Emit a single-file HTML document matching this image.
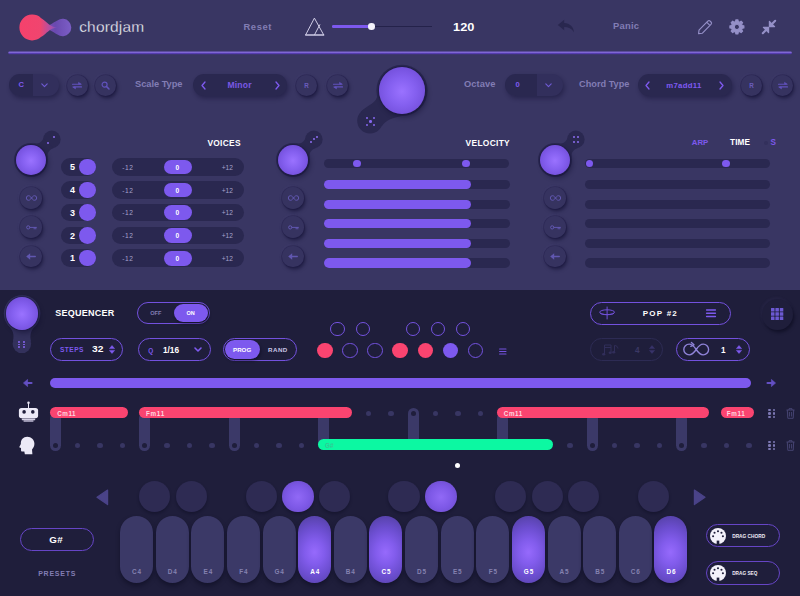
<!DOCTYPE html><html><head><meta charset='utf-8'><title>chordjam</title><style>
*{box-sizing:border-box;margin:0;padding:0}
html,body{width:800px;height:596px;overflow:hidden;background:#1f1e3b;}
body{font-family:"Liberation Sans",sans-serif;position:relative;color:#fff}
#top{position:absolute;left:0;top:0;width:800px;height:290px;background:#393663}
.a{position:absolute}
.x{position:absolute;white-space:nowrap;line-height:1}
.rb{position:absolute;border-radius:50%;background:#363360;box-shadow:0 0 0 .8px rgba(28,25,66,.45),1.5px 2.5px 3.5px rgba(15,13,45,.55),-1px -1px 2px rgba(120,115,180,.12);}
.knob{position:absolute;border-radius:50%;background:radial-gradient(circle at 50% 52%,#9a72ff 0%,#8560f0 40%,#7450dc 75%,#6848c8 100%);box-shadow:0 0 0 1px rgba(30,25,70,.55),2px 3px 5px rgba(10,8,40,.45)}
svg{position:absolute;overflow:visible}
</style></head><body>
<div id='top'></div>
<svg style='left:0px;top:0px' width='800' height='60' viewBox='0 0 800 60'><defs><linearGradient id="lg1" gradientUnits="userSpaceOnUse" x1="19" x2="58" y1="0" y2="0"><stop offset="0" stop-color="#f6416c"/><stop offset="0.55" stop-color="#f0456f"/><stop offset="0.8" stop-color="#b04fa6"/><stop offset="1" stop-color="#7a52c0"/></linearGradient>
<linearGradient id="lg2" gradientUnits="userSpaceOnUse" x1="42" x2="72" y1="0" y2="0"><stop offset="0" stop-color="#8a50b8" stop-opacity=".9"/><stop offset="0.45" stop-color="#6c4bb4" stop-opacity=".95"/><stop offset="1" stop-color="#8463d2" stop-opacity=".9"/></linearGradient><linearGradient id="lg3" x1="0" x2="0" y1="0" y2="1"><stop offset="0" stop-color="#7c62d4"/><stop offset=".45" stop-color="#8068d4"/><stop offset=".6" stop-color="#5a40b6"/><stop offset="1" stop-color="#4c36a0"/></linearGradient></defs>
<path d="M57.40 20.52 C52.30 23.17 48.18 26.90 42.00 27.50 C48.18 28.10 52.30 31.83 57.40 34.48 A8.7 8.7 0 1 0 57.40 20.52Z" fill="url(#lg2)"/>
<path d="M40.93 17.92 C47.05 21.56 49.59 26.90 57.00 27.50 C49.59 28.10 47.05 33.44 40.93 37.08 A12.9 12.9 0 1 1 40.93 17.92Z" fill="url(#lg1)"/>
<rect x="8.3" y="51.6" width="783.5" height="2.7" rx="1.2" fill="url(#lg3)"/></svg>
<div class='x' style='left:79.2px;top:19.36px;font-size:15.5px;color:#f6f5fc;letter-spacing:0.18px;-webkit-text-stroke:0.3px #393663'>chordjam</div>
<div class='x' style='left:243.50px;top:21.73px;font-size:9.4px;letter-spacing:0.60px;color:#827db4;font-weight:bold;'>Reset</div>
<div class='x' style='left:613.00px;top:21.31px;font-size:9.4px;letter-spacing:0.23px;color:#827db4;font-weight:bold;'>Panic</div>
<svg style='left:304px;top:16px' width='22' height='21' viewBox='0 0 22 21'><path d='M1.6 19 L10.4 2.1 L19.75 19' fill='none' stroke='#cfcce6' stroke-width='1' stroke-linejoin='round'/><path d='M1.2 19 H20.2' stroke='#cfcce6' stroke-width='1.5'/><path d='M10.4 19 L16 8.4' stroke='#cfcce6' stroke-width='1'/></svg>
<div class='a' style='left:372.00px;top:25.90px;width:59.50px;height:1.50px;border-radius:0;background:#24224a;'></div>
<div class='a' style='left:332.00px;top:25.30px;width:40.00px;height:2.70px;border-radius:1.3px;background:#7d59ee;'></div>
<div class='a' style='left:368.20px;top:23.30px;width:6.60px;height:6.60px;border-radius:50%;background:#f4f3fb'></div>
<div class='x' style='left:453.20px;top:22.59px;font-size:10.2px;letter-spacing:0.04px;color:#fff;font-weight:bold;transform:scaleX(1.25);transform-origin:0 0;'>120</div>
<svg style='left:557px;top:19px' width='18' height='14' viewBox='0 0 18 14'><path d='M7.2 0.8 L0.8 6 L7.2 11.2 L7.2 8 C11.5 8 14.5 9.5 17 13.2 C16.5 8 13 4.2 7.2 4 Z' fill='#29274f'/></svg>
<svg style='left:697px;top:19px' width='16' height='16' viewBox='0 0 16 16'><path d='M1.6 14.6 L2 11.2 L10.8 2.2 a1.7 1.7 0 0 1 2.4 0 l0.8 0.8 a1.7 1.7 0 0 1 0 2.4 L5.2 14.3 Z M9.9 3.3 L12.9 6.3' fill='none' stroke='#9590c8' stroke-width='1.15' stroke-linejoin='round'/></svg>
<svg style='left:728px;top:18px' width='18' height='18' viewBox='0 0 18 18'><path d='M15.91 7.79 L15.91 10.01 L14.25 10.18 L13.59 11.77 L14.64 13.07 L13.07 14.64 L11.77 13.59 L10.18 14.25 L10.01 15.91 L7.79 15.91 L7.62 14.25 L6.03 13.59 L4.73 14.64 L3.16 13.07 L4.21 11.77 L3.55 10.18 L1.89 10.01 L1.89 7.79 L3.55 7.62 L4.21 6.03 L3.16 4.73 L4.73 3.16 L6.03 4.21 L7.62 3.55 L7.79 1.89 L10.01 1.89 L10.18 3.55 L11.77 4.21 L13.07 3.16 L14.64 4.73 L13.59 6.03 L14.25 7.62Z M8.9 6.3 a2.6 2.6 0 1 0 0.01 0Z' fill='#9590c8' fill-rule='evenodd' stroke='#9590c8' stroke-width='1.1' stroke-linejoin='round'/></svg>
<svg style='left:761px;top:19px' width='16' height='16' viewBox='0 0 16 16'><g stroke='#9590c8' stroke-width='2.1' stroke-linecap='round'><path d='M14.2 1.8 L11 5'/><path d='M1.8 14.2 L5 11'/></g><path d='M8.4 2.4 L8.4 7.6 L13.6 7.6 Z M7.6 13.6 L7.6 8.4 L2.4 8.4 Z' fill='#9590c8' stroke='#9590c8' stroke-width='1.2' stroke-linejoin='round'/></svg>
<div class='a' style='left:9.00px;top:73.60px;width:49.50px;height:22.80px;border-radius:999px;background:#322f5c;box-shadow:1.5px 2.5px 4px rgba(15,13,45,.4)'></div>
<div class='a' style='left:9.00px;top:73.60px;width:24.00px;height:22.80px;border-radius:11.4px 0 0 11.4px;background:#2a2850;'></div>
<div class='x' style='left:18.51px;top:81.48px;font-size:7.6px;letter-spacing:0.00px;color:#7f5af0;font-weight:bold;'>C</div>
<svg style='left:40.8px;top:83.1px' width='7' height='4.4' viewBox='0 0 7 4.4'><path d='M0.8 0.8 L3.5 3.6 L6.2 0.8' fill='none' stroke='#6e5ad2' stroke-width='1.15' stroke-linecap='round' stroke-linejoin='round'/></svg>
<div class='rb' style='left:66.5px;top:74.5px;width:21.6px;height:21.6px'></div>
<svg style='left:72.3px;top:81.7px' width='10' height='7.2' viewBox='0 0 10 7.2'><path d='M0.5 2.3 H8.3 M9.5 4.9 H1.7' fill='none' stroke='#6152bc' stroke-width='1.1' stroke-linecap='round'/><path d='M6.5 0.3 L9.5 2.3 L6.5 2.3Z M3.5 6.9 L0.5 4.9 L3.5 4.9Z' fill='#6152bc' stroke='#6152bc' stroke-width='.5' stroke-linejoin='round'/></svg>
<div class='rb' style='left:94.5px;top:74.5px;width:21.6px;height:21.6px'></div>
<svg style='left:100.8px;top:80.8px' width='9' height='9' viewBox='0 0 9 9'><circle cx='3.6' cy='3.6' r='2.5' fill='none' stroke='#6152bc' stroke-width='1.2'/><path d='M5.6 5.6 L8 8' stroke='#6152bc' stroke-width='1.5' stroke-linecap='round'/></svg>
<div class='x' style='left:135.00px;top:80.21px;font-size:9.3px;letter-spacing:-0.04px;color:#827db4;font-weight:bold;'>Scale Type</div>
<div class='a' style='left:193.00px;top:73.60px;width:94.00px;height:22.80px;border-radius:999px;background:#2a2850;box-shadow:1.5px 2.5px 4px rgba(15,13,45,.4)'></div>
<svg style='left:200.5px;top:80.7px' width='5' height='9' viewBox='0 0 5 9'><path d='M4 1 L1 4.5 L4 8' fill='none' stroke='#7f5af0' stroke-width='1.3' stroke-linecap='round' stroke-linejoin='round'/></svg>
<svg style='left:274.5px;top:80.7px' width='5' height='9' viewBox='0 0 5 9'><path d='M1 1 L4 4.5 L1 8' fill='none' stroke='#7f5af0' stroke-width='1.3' stroke-linecap='round' stroke-linejoin='round'/></svg>
<div class='x' style='left:227.50px;top:80.58px;font-size:8.6px;letter-spacing:0.15px;color:#7a59e6;font-weight:bold;'>Minor</div>
<div class='rb' style='left:295.5px;top:74.5px;width:21.6px;height:21.6px'></div>
<div class='x' style='left:304.33px;top:83.03px;font-size:6.3px;letter-spacing:0.00px;color:#6a5cbc;font-weight:bold;'>R</div>
<div class='rb' style='left:326.5px;top:74.5px;width:21.6px;height:21.6px'></div>
<svg style='left:332.5px;top:81.7px' width='10' height='7.2' viewBox='0 0 10 7.2'><path d='M0.5 2.3 H8.3 M9.5 4.9 H1.7' fill='none' stroke='#6152bc' stroke-width='1.1' stroke-linecap='round'/><path d='M6.5 0.3 L9.5 2.3 L6.5 2.3Z M3.5 6.9 L0.5 4.9 L3.5 4.9Z' fill='#6152bc' stroke='#6152bc' stroke-width='.5' stroke-linejoin='round'/></svg>
<svg style='left:340px;top:55px' width='100' height='90' viewBox='340 55 100 90'><g fill="#2a2850"><circle cx="402" cy="90.4" r="25.6"/><circle cx="370" cy="120.8" r="12.8"/>
<path d="M361 111.5 C369 104 376 104 378 94 L402 116 C392 118 386 120 382 126 Z"/></g></svg>
<div class='knob' style='left:378.7px;top:67.10000000000001px;width:46.6px;height:46.6px'></div>
<div class='a' style='left:366.00px;top:116.80px;width:2.40px;height:2.40px;border-radius:50%;background:#8666ee'></div>
<div class='a' style='left:372.80px;top:116.80px;width:2.40px;height:2.40px;border-radius:50%;background:#8666ee'></div>
<div class='a' style='left:369.40px;top:120.20px;width:2.40px;height:2.40px;border-radius:50%;background:#8666ee'></div>
<div class='a' style='left:366.00px;top:123.60px;width:2.40px;height:2.40px;border-radius:50%;background:#8666ee'></div>
<div class='a' style='left:372.80px;top:123.60px;width:2.40px;height:2.40px;border-radius:50%;background:#8666ee'></div>
<div class='x' style='left:464.00px;top:79.66px;font-size:9.3px;letter-spacing:0.06px;color:#827db4;font-weight:bold;'>Octave</div>
<div class='a' style='left:505.00px;top:73.60px;width:57.50px;height:22.80px;border-radius:999px;background:#322f5c;box-shadow:1.5px 2.5px 4px rgba(15,13,45,.4)'></div>
<div class='a' style='left:505.00px;top:73.60px;width:32.00px;height:22.80px;border-radius:11.4px 0 0 11.4px;background:#2a2850;'></div>
<div class='x' style='left:515.39px;top:81.40px;font-size:7.6px;letter-spacing:0.00px;color:#7f5af0;font-weight:bold;'>0</div>
<svg style='left:544.8px;top:83.1px' width='7' height='4.4' viewBox='0 0 7 4.4'><path d='M0.8 0.8 L3.5 3.6 L6.2 0.8' fill='none' stroke='#6e5ad2' stroke-width='1.15' stroke-linecap='round' stroke-linejoin='round'/></svg>
<div class='x' style='left:579.00px;top:80.34px;font-size:9.2px;letter-spacing:0.01px;color:#827db4;font-weight:bold;'>Chord Type</div>
<div class='a' style='left:638.00px;top:73.60px;width:93.50px;height:22.80px;border-radius:999px;background:#2a2850;box-shadow:1.5px 2.5px 4px rgba(15,13,45,.4)'></div>
<svg style='left:644.5px;top:80.7px' width='5' height='9' viewBox='0 0 5 9'><path d='M4 1 L1 4.5 L4 8' fill='none' stroke='#7f5af0' stroke-width='1.3' stroke-linecap='round' stroke-linejoin='round'/></svg>
<svg style='left:719.0px;top:80.7px' width='5' height='9' viewBox='0 0 5 9'><path d='M1 1 L4 4.5 L1 8' fill='none' stroke='#7f5af0' stroke-width='1.3' stroke-linecap='round' stroke-linejoin='round'/></svg>
<div class='x' style='left:666.20px;top:82.05px;font-size:7.8px;letter-spacing:0.29px;color:#7f5af0;font-weight:bold;'>m7add11</div>
<div class='rb' style='left:740.5px;top:74.5px;width:21.6px;height:21.6px'></div>
<div class='x' style='left:749.33px;top:83.03px;font-size:6.3px;letter-spacing:0.00px;color:#6a5cbc;font-weight:bold;'>R</div>
<div class='rb' style='left:771.5px;top:74.5px;width:21.6px;height:21.6px'></div>
<svg style='left:777.5px;top:81.7px' width='10' height='7.2' viewBox='0 0 10 7.2'><path d='M0.5 2.3 H8.3 M9.5 4.9 H1.7' fill='none' stroke='#6152bc' stroke-width='1.1' stroke-linecap='round'/><path d='M6.5 0.3 L9.5 2.3 L6.5 2.3Z M3.5 6.9 L0.5 4.9 L3.5 4.9Z' fill='#6152bc' stroke='#6152bc' stroke-width='.5' stroke-linejoin='round'/></svg>
<svg style='left:6.199999999999999px;top:125px' width='60' height='60' viewBox='6.199999999999999 125 60 60'><g fill="#2a2850"><circle cx="31.2" cy="160" r="17"/><circle cx="52.0" cy="139.4" r="8.8"/>
<path d="M34.2 143.5 C40.2 144 42.2 141 43.5 138.4 L54.0 147.9 C51.2 149 47.2 151 47.7 157Z"/></g></svg>
<div class='knob' style='left:16.1px;top:144.9px;width:30.2px;height:30.2px'></div>
<div class='a' style='left:52.60px;top:136.20px;width:2.00px;height:2.00px;border-radius:50%;background:#8c6cf0'></div>
<div class='a' style='left:47.20px;top:141.80px;width:2.00px;height:2.00px;border-radius:50%;background:#8c6cf0'></div>
<svg style='left:268.2px;top:125px' width='60' height='60' viewBox='268.2 125 60 60'><g fill="#2a2850"><circle cx="293.2" cy="160" r="17"/><circle cx="314.0" cy="139.4" r="8.8"/>
<path d="M296.2 143.5 C302.2 144 304.2 141 305.5 138.4 L316.0 147.9 C313.2 149 309.2 151 309.7 157Z"/></g></svg>
<div class='knob' style='left:278.09999999999997px;top:144.9px;width:30.2px;height:30.2px'></div>
<div class='a' style='left:315.70px;top:135.70px;width:2.00px;height:2.00px;border-radius:50%;background:#8c6cf0'></div>
<div class='a' style='left:313.00px;top:138.40px;width:2.00px;height:2.00px;border-radius:50%;background:#8c6cf0'></div>
<div class='a' style='left:310.30px;top:141.10px;width:2.00px;height:2.00px;border-radius:50%;background:#8c6cf0'></div>
<svg style='left:530.2px;top:125px' width='60' height='60' viewBox='530.2 125 60 60'><g fill="#2a2850"><circle cx="555.2" cy="160" r="17"/><circle cx="576.0" cy="139.4" r="8.8"/>
<path d="M558.2 143.5 C564.2 144 566.2 141 567.5 138.4 L578.0 147.9 C575.2 149 571.2 151 571.7 157Z"/></g></svg>
<div class='knob' style='left:540.1px;top:144.9px;width:30.2px;height:30.2px'></div>
<div class='a' style='left:572.60px;top:136.00px;width:2.00px;height:2.00px;border-radius:50%;background:#8c6cf0'></div>
<div class='a' style='left:577.40px;top:136.00px;width:2.00px;height:2.00px;border-radius:50%;background:#8c6cf0'></div>
<div class='a' style='left:572.60px;top:140.80px;width:2.00px;height:2.00px;border-radius:50%;background:#8c6cf0'></div>
<div class='a' style='left:577.40px;top:140.80px;width:2.00px;height:2.00px;border-radius:50%;background:#8c6cf0'></div>
<div class='rb' style='left:20.4px;top:187.2px;width:21.6px;height:21.6px'></div>
<svg style='left:25.7px;top:195px' width='11' height='6' viewBox='0 0 11 6'><path d='M5.5 3 C4.3 1.2 3.3 0.7 2.6 0.7 A2.3 2.3 0 0 0 2.6 5.3 C3.3 5.3 4.3 4.8 5.5 3 C6.7 1.2 7.7 0.7 8.4 0.7 A2.3 2.3 0 0 1 8.4 5.3 C7.7 5.3 6.7 4.8 5.5 3Z' fill='none' stroke='#6157b0' stroke-width='1'/></svg>
<div class='rb' style='left:20.4px;top:216.39999999999998px;width:21.6px;height:21.6px'></div>
<svg style='left:25.7px;top:224.7px' width='11' height='5' viewBox='0 0 11 5'><circle cx='2.2' cy='2.4' r='1.6' fill='none' stroke='#6157b0' stroke-width='1'/><path d='M3.9 2.4 H10.3 M8.2 2.4 V3.9 M9.8 2.4 V3.9' fill='none' stroke='#6157b0' stroke-width='1' stroke-linecap='round'/></svg>
<div class='rb' style='left:20.4px;top:245.8px;width:21.6px;height:21.6px'></div>
<svg style='left:25.7px;top:253.10000000000002px' width='10' height='7' viewBox='0 0 10 7'><path d='M4.2 0.2 L0.2 3.5 L4.2 6.8 Z' fill='#6157b0'/><path d='M3 3.5 H9.3' stroke='#6157b0' stroke-width='1.3' stroke-linecap='round'/></svg>
<div class='rb' style='left:282.4px;top:187.2px;width:21.6px;height:21.6px'></div>
<svg style='left:287.7px;top:195px' width='11' height='6' viewBox='0 0 11 6'><path d='M5.5 3 C4.3 1.2 3.3 0.7 2.6 0.7 A2.3 2.3 0 0 0 2.6 5.3 C3.3 5.3 4.3 4.8 5.5 3 C6.7 1.2 7.7 0.7 8.4 0.7 A2.3 2.3 0 0 1 8.4 5.3 C7.7 5.3 6.7 4.8 5.5 3Z' fill='none' stroke='#6157b0' stroke-width='1'/></svg>
<div class='rb' style='left:282.4px;top:216.39999999999998px;width:21.6px;height:21.6px'></div>
<svg style='left:287.7px;top:224.7px' width='11' height='5' viewBox='0 0 11 5'><circle cx='2.2' cy='2.4' r='1.6' fill='none' stroke='#6157b0' stroke-width='1'/><path d='M3.9 2.4 H10.3 M8.2 2.4 V3.9 M9.8 2.4 V3.9' fill='none' stroke='#6157b0' stroke-width='1' stroke-linecap='round'/></svg>
<div class='rb' style='left:282.4px;top:245.8px;width:21.6px;height:21.6px'></div>
<svg style='left:287.7px;top:253.10000000000002px' width='10' height='7' viewBox='0 0 10 7'><path d='M4.2 0.2 L0.2 3.5 L4.2 6.8 Z' fill='#6157b0'/><path d='M3 3.5 H9.3' stroke='#6157b0' stroke-width='1.3' stroke-linecap='round'/></svg>
<div class='rb' style='left:544.4000000000001px;top:187.2px;width:21.6px;height:21.6px'></div>
<svg style='left:549.7px;top:195px' width='11' height='6' viewBox='0 0 11 6'><path d='M5.5 3 C4.3 1.2 3.3 0.7 2.6 0.7 A2.3 2.3 0 0 0 2.6 5.3 C3.3 5.3 4.3 4.8 5.5 3 C6.7 1.2 7.7 0.7 8.4 0.7 A2.3 2.3 0 0 1 8.4 5.3 C7.7 5.3 6.7 4.8 5.5 3Z' fill='none' stroke='#6157b0' stroke-width='1'/></svg>
<div class='rb' style='left:544.4000000000001px;top:216.39999999999998px;width:21.6px;height:21.6px'></div>
<svg style='left:549.7px;top:224.7px' width='11' height='5' viewBox='0 0 11 5'><circle cx='2.2' cy='2.4' r='1.6' fill='none' stroke='#6157b0' stroke-width='1'/><path d='M3.9 2.4 H10.3 M8.2 2.4 V3.9 M9.8 2.4 V3.9' fill='none' stroke='#6157b0' stroke-width='1' stroke-linecap='round'/></svg>
<div class='rb' style='left:544.4000000000001px;top:245.8px;width:21.6px;height:21.6px'></div>
<svg style='left:549.7px;top:253.10000000000002px' width='10' height='7' viewBox='0 0 10 7'><path d='M4.2 0.2 L0.2 3.5 L4.2 6.8 Z' fill='#6157b0'/><path d='M3 3.5 H9.3' stroke='#6157b0' stroke-width='1.3' stroke-linecap='round'/></svg>
<div class='x' style='left:207.40px;top:138.76px;font-size:8.4px;letter-spacing:0.29px;color:#fff;font-weight:bold;'>VOICES</div>
<div class='a' style='left:61.30px;top:158.30px;width:34.60px;height:17.60px;border-radius:999px;background:#2a2850;'></div>
<div class='x' style='left:70.00px;top:162.94px;font-size:9px;letter-spacing:0.00px;color:#fff;font-weight:bold;'>5</div>
<div class='a' style='left:79.10px;top:158.80px;width:16.60px;height:16.60px;border-radius:50%;background:#7d59ee'></div>
<div class='a' style='left:112.00px;top:158.30px;width:132.00px;height:17.60px;border-radius:999px;background:#2a2850;'></div>
<div class='x' style='left:122.30px;top:164.88px;font-size:6.6px;letter-spacing:0.58px;color:#a6a2cc;font-weight:normal;'>-12</div>
<div class='a' style='left:164.00px;top:159.70px;width:27.60px;height:14.80px;border-radius:999px;background:#7d59ee;'></div>
<div class='x' style='left:175.42px;top:164.88px;font-size:6.6px;letter-spacing:0.00px;color:#fff;font-weight:bold;'>0</div>
<div class='x' style='left:221.80px;top:164.88px;font-size:6.6px;letter-spacing:-0.04px;color:#a6a2cc;font-weight:normal;'>+12</div>
<div class='a' style='left:61.30px;top:181.10px;width:34.60px;height:17.60px;border-radius:999px;background:#2a2850;'></div>
<div class='x' style='left:70.00px;top:185.58px;font-size:9px;letter-spacing:0.00px;color:#fff;font-weight:bold;'>4</div>
<div class='a' style='left:79.10px;top:181.60px;width:16.60px;height:16.60px;border-radius:50%;background:#7d59ee'></div>
<div class='a' style='left:112.00px;top:181.10px;width:132.00px;height:17.60px;border-radius:999px;background:#2a2850;'></div>
<div class='x' style='left:122.30px;top:187.68px;font-size:6.6px;letter-spacing:0.58px;color:#a6a2cc;font-weight:normal;'>-12</div>
<div class='a' style='left:164.00px;top:182.50px;width:27.60px;height:14.80px;border-radius:999px;background:#7d59ee;'></div>
<div class='x' style='left:175.42px;top:187.68px;font-size:6.6px;letter-spacing:0.00px;color:#fff;font-weight:bold;'>0</div>
<div class='x' style='left:221.80px;top:187.68px;font-size:6.6px;letter-spacing:-0.04px;color:#a6a2cc;font-weight:normal;'>+12</div>
<div class='a' style='left:61.30px;top:203.90px;width:34.60px;height:17.60px;border-radius:999px;background:#2a2850;'></div>
<div class='x' style='left:70.00px;top:209.02px;font-size:9px;letter-spacing:0.00px;color:#fff;font-weight:bold;'>3</div>
<div class='a' style='left:79.10px;top:204.40px;width:16.60px;height:16.60px;border-radius:50%;background:#7d59ee'></div>
<div class='a' style='left:112.00px;top:203.90px;width:132.00px;height:17.60px;border-radius:999px;background:#2a2850;'></div>
<div class='x' style='left:122.30px;top:210.48px;font-size:6.6px;letter-spacing:0.58px;color:#a6a2cc;font-weight:normal;'>-12</div>
<div class='a' style='left:164.00px;top:205.30px;width:27.60px;height:14.80px;border-radius:999px;background:#7d59ee;'></div>
<div class='x' style='left:175.42px;top:210.48px;font-size:6.6px;letter-spacing:0.00px;color:#fff;font-weight:bold;'>0</div>
<div class='x' style='left:221.80px;top:210.48px;font-size:6.6px;letter-spacing:-0.04px;color:#a6a2cc;font-weight:normal;'>+12</div>
<div class='a' style='left:61.30px;top:226.70px;width:34.60px;height:17.60px;border-radius:999px;background:#2a2850;'></div>
<div class='x' style='left:70.00px;top:231.66px;font-size:9px;letter-spacing:0.00px;color:#fff;font-weight:bold;'>2</div>
<div class='a' style='left:79.10px;top:227.20px;width:16.60px;height:16.60px;border-radius:50%;background:#7d59ee'></div>
<div class='a' style='left:112.00px;top:226.70px;width:132.00px;height:17.60px;border-radius:999px;background:#2a2850;'></div>
<div class='x' style='left:122.30px;top:233.28px;font-size:6.6px;letter-spacing:0.58px;color:#a6a2cc;font-weight:normal;'>-12</div>
<div class='a' style='left:164.00px;top:228.10px;width:27.60px;height:14.80px;border-radius:999px;background:#7d59ee;'></div>
<div class='x' style='left:175.42px;top:233.28px;font-size:6.6px;letter-spacing:0.00px;color:#fff;font-weight:bold;'>0</div>
<div class='x' style='left:221.80px;top:233.28px;font-size:6.6px;letter-spacing:-0.04px;color:#a6a2cc;font-weight:normal;'>+12</div>
<div class='a' style='left:61.30px;top:249.40px;width:34.60px;height:17.60px;border-radius:999px;background:#2a2850;'></div>
<div class='x' style='left:70.00px;top:254.12px;font-size:9px;letter-spacing:0.00px;color:#fff;font-weight:bold;'>1</div>
<div class='a' style='left:79.10px;top:249.90px;width:16.60px;height:16.60px;border-radius:50%;background:#7d59ee'></div>
<div class='a' style='left:112.00px;top:249.40px;width:132.00px;height:17.60px;border-radius:999px;background:#2a2850;'></div>
<div class='x' style='left:122.30px;top:255.98px;font-size:6.6px;letter-spacing:0.58px;color:#a6a2cc;font-weight:normal;'>-12</div>
<div class='a' style='left:164.00px;top:250.80px;width:27.60px;height:14.80px;border-radius:999px;background:#7d59ee;'></div>
<div class='x' style='left:175.42px;top:255.98px;font-size:6.6px;letter-spacing:0.00px;color:#fff;font-weight:bold;'>0</div>
<div class='x' style='left:221.80px;top:255.98px;font-size:6.6px;letter-spacing:-0.04px;color:#a6a2cc;font-weight:normal;'>+12</div>
<div class='x' style='left:465.60px;top:138.76px;font-size:8.4px;letter-spacing:0.31px;color:#fff;font-weight:bold;'>VELOCITY</div>
<div class='a' style='left:324.00px;top:158.90px;width:185.40px;height:9.40px;border-radius:999px;background:#2a2850;'></div>
<div class='a' style='left:353.20px;top:159.90px;width:7.60px;height:7.60px;border-radius:50%;background:#7d59ee'></div>
<div class='a' style='left:462.20px;top:159.90px;width:7.60px;height:7.60px;border-radius:50%;background:#7d59ee'></div>
<div class='a' style='left:324.00px;top:179.90px;width:186.00px;height:9.40px;border-radius:999px;background:#2a2850;'></div>
<div class='a' style='left:324.00px;top:179.90px;width:147.30px;height:9.40px;border-radius:999px;background:#7d59ee;'></div>
<div class='a' style='left:324.00px;top:199.50px;width:186.00px;height:9.40px;border-radius:999px;background:#2a2850;'></div>
<div class='a' style='left:324.00px;top:199.50px;width:147.30px;height:9.40px;border-radius:999px;background:#7d59ee;'></div>
<div class='a' style='left:324.00px;top:219.10px;width:186.00px;height:9.40px;border-radius:999px;background:#2a2850;'></div>
<div class='a' style='left:324.00px;top:219.10px;width:147.30px;height:9.40px;border-radius:999px;background:#7d59ee;'></div>
<div class='a' style='left:324.00px;top:238.60px;width:186.00px;height:9.40px;border-radius:999px;background:#2a2850;'></div>
<div class='a' style='left:324.00px;top:238.60px;width:147.30px;height:9.40px;border-radius:999px;background:#7d59ee;'></div>
<div class='a' style='left:324.00px;top:258.20px;width:186.00px;height:9.40px;border-radius:999px;background:#2a2850;'></div>
<div class='a' style='left:324.00px;top:258.20px;width:147.30px;height:9.40px;border-radius:999px;background:#7d59ee;'></div>
<div class='x' style='left:691.80px;top:138.87px;font-size:7.8px;letter-spacing:-0.03px;color:#7d59ee;font-weight:bold;'>ARP</div>
<div class='x' style='left:730.00px;top:139.36px;font-size:8.2px;letter-spacing:0.13px;color:#fff;font-weight:bold;'>TIME</div>
<div class='x' style='left:770.57px;top:139.36px;font-size:8.2px;letter-spacing:0.00px;color:#7d59ee;font-weight:bold;'>S</div>
<div class='a' style='left:764.40px;top:141.40px;width:3.80px;height:3.80px;border-radius:50%;background:#33305c'></div>
<div class='a' style='left:585.00px;top:158.90px;width:184.60px;height:9.40px;border-radius:999px;background:#2a2850;'></div>
<div class='a' style='left:585.90px;top:159.90px;width:7.60px;height:7.60px;border-radius:50%;background:#7d59ee'></div>
<div class='a' style='left:722.20px;top:159.90px;width:7.60px;height:7.60px;border-radius:50%;background:#7d59ee'></div>
<div class='a' style='left:585.00px;top:179.90px;width:185.00px;height:9.40px;border-radius:999px;background:#2a2850;'></div>
<div class='a' style='left:585.00px;top:199.50px;width:185.00px;height:9.40px;border-radius:999px;background:#2a2850;'></div>
<div class='a' style='left:585.00px;top:219.10px;width:185.00px;height:9.40px;border-radius:999px;background:#2a2850;'></div>
<div class='a' style='left:585.00px;top:238.60px;width:185.00px;height:9.40px;border-radius:999px;background:#2a2850;'></div>
<div class='a' style='left:585.00px;top:258.20px;width:185.00px;height:9.40px;border-radius:999px;background:#2a2850;'></div>
<svg style='left:0px;top:290px' width='50' height='75' viewBox='0 290 50 75'><g fill="#33315c"><circle cx="22.1" cy="313.5" r="18.3"/><circle cx="21.9" cy="343.8" r="9.3"/><path d="M7.5 324.5 C13 330 14.5 334 12.9 341.5 L31 341.5 C29.5 334 31 330 36.5 324.5Z"/></g></svg>
<div class='knob' style='left:5.900000000000002px;top:297.3px;width:32.4px;height:32.4px'></div>
<div class='a' style='left:18.40px;top:340.80px;width:1.80px;height:1.80px;border-radius:50%;background:#8463ee'></div>
<div class='a' style='left:18.40px;top:343.50px;width:1.80px;height:1.80px;border-radius:50%;background:#8463ee'></div>
<div class='a' style='left:18.40px;top:346.20px;width:1.80px;height:1.80px;border-radius:50%;background:#8463ee'></div>
<div class='a' style='left:23.40px;top:340.80px;width:1.80px;height:1.80px;border-radius:50%;background:#8463ee'></div>
<div class='a' style='left:23.40px;top:343.50px;width:1.80px;height:1.80px;border-radius:50%;background:#8463ee'></div>
<div class='a' style='left:23.40px;top:346.20px;width:1.80px;height:1.80px;border-radius:50%;background:#8463ee'></div>
<div class='x' style='left:55.30px;top:308.76px;font-size:9px;letter-spacing:0.25px;color:#fff;font-weight:bold;'>SEQUENCER</div>
<div class='a' style='left:137.30px;top:301.50px;width:72.60px;height:22.60px;border-radius:999px;border:1px solid #7351de;'></div>
<div class='a' style='left:173.80px;top:303.60px;width:34.20px;height:18.40px;border-radius:999px;background:#7d59ee;box-shadow:1px 2px 3px rgba(8,7,25,.45)'></div>
<div class='x' style='left:150.20px;top:311.04px;font-size:5.6px;letter-spacing:0.00px;color:#827db4;font-weight:bold;'>OFF</div>
<div class='x' style='left:186.60px;top:311.12px;font-size:5.5px;letter-spacing:-0.05px;color:#fff;font-weight:bold;'>ON</div>
<div class='a' style='left:50.00px;top:338.00px;width:73.30px;height:22.80px;border-radius:999px;border:1px solid #7351de;'></div>
<div class='x' style='left:60.00px;top:347.34px;font-size:6.6px;letter-spacing:0.44px;color:#7d59ee;font-weight:bold;'>STEPS</div>
<div class='x' style='left:91.90px;top:345.32px;font-size:8.5px;letter-spacing:-0.02px;color:#fff;font-weight:bold;transform:scaleX(1.2);transform-origin:0 0;'>32</div>
<svg style='left:109px;top:345.2px' width='6' height='9' viewBox='0 0 6 9'><path d='M3 0.5 L5.6 3.6 H0.4Z M3 8.5 L5.6 5.4 H0.4Z' fill='#7f5af0' stroke='#7f5af0' stroke-width='.5' stroke-linejoin='round'/></svg>
<div class='a' style='left:137.60px;top:338.00px;width:73.00px;height:22.80px;border-radius:999px;border:1px solid #7351de;'></div>
<div class='x' style='left:148.35px;top:347.67px;font-size:6.4px;letter-spacing:0.00px;color:#7d59ee;font-weight:bold;'>Q</div>
<div class='x' style='left:163.00px;top:345.59px;font-size:8.3px;letter-spacing:-0.05px;color:#fff;font-weight:bold;'>1/16</div>
<svg style='left:194px;top:347.2px' width='8' height='5' viewBox='0 0 8 5'><path d='M1 1 L4 4 L7 1' fill='none' stroke='#7f5af0' stroke-width='1.6' stroke-linecap='round' stroke-linejoin='round'/></svg>
<div class='a' style='left:222.80px;top:338.00px;width:74.60px;height:22.80px;border-radius:999px;border:1px solid #7351de;'></div>
<div class='a' style='left:225.00px;top:340.20px;width:35.00px;height:18.60px;border-radius:999px;background:#7d59ee;box-shadow:1px 2px 3px rgba(8,7,25,.45)'></div>
<div class='x' style='left:233.00px;top:346.67px;font-size:6.2px;letter-spacing:0.01px;color:#fff;font-weight:bold;'>PROG</div>
<div class='x' style='left:268.10px;top:346.67px;font-size:6.2px;letter-spacing:0.43px;color:#c9c6e6;font-weight:bold;'>RAND</div>
<div class='a' style='left:330.20px;top:321.50px;width:14.40px;height:14.40px;border-radius:50%;border:1px solid #7452e0'></div>
<div class='a' style='left:355.50px;top:321.50px;width:14.40px;height:14.40px;border-radius:50%;border:1px solid #7452e0'></div>
<div class='a' style='left:405.80px;top:321.50px;width:14.40px;height:14.40px;border-radius:50%;border:1px solid #7452e0'></div>
<div class='a' style='left:431.10px;top:321.50px;width:14.40px;height:14.40px;border-radius:50%;border:1px solid #7452e0'></div>
<div class='a' style='left:455.90px;top:321.50px;width:14.40px;height:14.40px;border-radius:50%;border:1px solid #7452e0'></div>
<div class='a' style='left:317.30px;top:343.10px;width:15.40px;height:15.40px;border-radius:50%;background:#fa4470'></div>
<div class='a' style='left:342.30px;top:343.10px;width:15.40px;height:15.40px;border-radius:50%;border:1px solid #7452e0'></div>
<div class='a' style='left:367.40px;top:343.10px;width:15.40px;height:15.40px;border-radius:50%;border:1px solid #7452e0'></div>
<div class='a' style='left:392.40px;top:343.10px;width:15.40px;height:15.40px;border-radius:50%;background:#fa4470'></div>
<div class='a' style='left:417.90px;top:343.10px;width:15.40px;height:15.40px;border-radius:50%;background:#fa4470'></div>
<div class='a' style='left:443.00px;top:343.10px;width:15.40px;height:15.40px;border-radius:50%;background:#7d59ee'></div>
<div class='a' style='left:467.90px;top:343.10px;width:15.40px;height:15.40px;border-radius:50%;border:1px solid #7452e0'></div>
<svg style='left:498.59999999999997px;top:348.0px' width='7.6' height='7.0' viewBox='0 0 7.6 7.0'><path d='M0.6 1 H7.0 M0.6 3.5 H7.0 M0.6 6.0 H7.0' stroke='#7452e0' stroke-width='1.1' stroke-linecap='round'/></svg>
<div class='a' style='left:589.60px;top:302.00px;width:141.00px;height:23.00px;border-radius:999px;border:1px solid #7351de;'></div>
<svg style='left:599px;top:306px' width='17' height='15' viewBox='0 0 17 15'><g fill='none' stroke='#7150d8' stroke-width='1'><ellipse cx='8.1' cy='6.2' rx='7.4' ry='2.4'/><path d='M1.2 7.2 C3 9.2 13.2 9.2 15 7.2'/><path d='M8.1 0.6 V13.4'/></g></svg>
<div class='x' style='left:642.80px;top:309.89px;font-size:8px;letter-spacing:1.22px;color:#fff;font-weight:bold;'>POP #2</div>
<svg style='left:706.2px;top:309.2px' width='10' height='8.6' viewBox='0 0 10 8.6'><path d='M0.6 1 H9.4 M0.6 4.3 H9.4 M0.6 7.6 H9.4' stroke='#7d59ee' stroke-width='1.5' stroke-linecap='round'/></svg>
<div class='a' style='left:761.5px;top:298.8px;width:31px;height:31px;border-radius:50%;background:#1f1e3b;box-shadow:1.5px 2.5px 3px rgba(8,7,25,.5),-1px -1.5px 2.5px rgba(85,80,130,.13)'></div>
<svg style='left:771px;top:307.9px' width='13' height='13' viewBox='0 0 13 13'><rect x='0.0' y='0.0' width='3.5' height='3.5' rx='.3' fill='#6c59d2'/><rect x='0.0' y='4.3' width='3.5' height='3.5' rx='.3' fill='#6c59d2'/><rect x='0.0' y='8.6' width='3.5' height='3.5' rx='.3' fill='#6c59d2'/><rect x='4.4' y='0.0' width='3.5' height='3.5' rx='.3' fill='#6c59d2'/><rect x='4.4' y='4.3' width='3.5' height='3.5' rx='.3' fill='#6c59d2'/><rect x='4.4' y='8.6' width='3.5' height='3.5' rx='.3' fill='#6c59d2'/><rect x='8.8' y='0.0' width='3.5' height='3.5' rx='.3' fill='#6c59d2'/><rect x='8.8' y='4.3' width='3.5' height='3.5' rx='.3' fill='#6c59d2'/><rect x='8.8' y='8.6' width='3.5' height='3.5' rx='.3' fill='#6c59d2'/></svg>
<div class='a' style='left:589.60px;top:338.00px;width:73.80px;height:23.00px;border-radius:999px;border:1px solid #2d2b54;'></div>
<svg style='left:602px;top:344px' width='18' height='12' viewBox='0 0 18 12'><g fill='none' stroke='#312e5a' stroke-width='1'><path d='M2.5 10 V1 H9 V8.5 M2.5 3.5 H9'/><path d='M12.5 8 V1.5 C14.5 1.5 15.5 2.5 16 4.5'/></g><g fill='#312e5a'><ellipse cx='1.7' cy='10.2' rx='1.6' ry='1.2'/><ellipse cx='8.2' cy='8.8' rx='1.6' ry='1.2'/><ellipse cx='11.7' cy='8.3' rx='1.6' ry='1.2'/></g></svg>
<div class='x' style='left:635.12px;top:346.90px;font-size:8.2px;letter-spacing:0.00px;color:#3b3864;font-weight:bold;'>4</div>
<svg style='left:649.2px;top:345.2px' width='6' height='9' viewBox='0 0 6 9'><path d='M3 0.5 L5.6 3.6 H0.4Z M3 8.5 L5.6 5.4 H0.4Z' fill='#38336a' stroke='#38336a' stroke-width='.5' stroke-linejoin='round'/></svg>
<div class='a' style='left:675.80px;top:338.00px;width:74.30px;height:23.00px;border-radius:999px;border:1px solid #7351de;'></div>
<svg style='left:682.6px;top:343.2px' width='26.4' height='13' viewBox='0 0 26.4 13'><path d='M13.2 6.5 C10.6 2.6 8.6 1.1 6.2 1.1 A5.4 5.4 0 0 0 6.2 11.9 C8.6 11.9 10.6 10.4 13.2 6.5 C15.8 2.6 17.8 1.1 20.2 1.1 A5.4 5.4 0 0 1 20.2 11.9 C17.8 11.9 15.8 10.4 13.2 6.5' fill='none' stroke='#8f83d8' stroke-width='1.4'/><path d='M8.4 -0.6 L11 1.8 L7.8 3.4' fill='none' stroke='#8f83d8' stroke-width='1.3' stroke-linecap='round' stroke-linejoin='round'/></svg>
<div class='x' style='left:721.02px;top:346.90px;font-size:8.2px;letter-spacing:0.00px;color:#fff;font-weight:bold;'>1</div>
<svg style='left:735.8px;top:345.2px' width='6' height='9' viewBox='0 0 6 9'><path d='M3 0.5 L5.6 3.6 H0.4Z M3 8.5 L5.6 5.4 H0.4Z' fill='#7f5af0' stroke='#7f5af0' stroke-width='.5' stroke-linejoin='round'/></svg>
<svg style='left:23.0px;top:378.8px' width='9' height='8' viewBox='0 0 9 8'><path d='M4.6 0.4 L0.4 4 L4.6 7.6Z' fill='#6450c4' stroke='#6450c4' stroke-width='.6' stroke-linejoin='round'/><path d='M3.5 4 H8.6' stroke='#6450c4' stroke-width='1.9' stroke-linecap='round'/></svg>
<svg style='left:767.3px;top:378.8px' width='9' height='8' viewBox='0 0 9 8'><path d='M4.4 0.4 L8.6 4 L4.4 7.6Z' fill='#6450c4' stroke='#6450c4' stroke-width='.6' stroke-linejoin='round'/><path d='M0.4 4 H5.5' stroke='#6450c4' stroke-width='1.9' stroke-linecap='round'/></svg>
<div class='a' style='left:50.00px;top:378.00px;width:700.60px;height:10.00px;border-radius:999px;background:#7d59ee;'></div>
<div class='a' style='left:49.95px;top:412.90px;width:10.80px;height:37.80px;border-radius:5.4px;background:#3b3968;'></div>
<div class='a' style='left:139.43px;top:412.90px;width:10.80px;height:37.80px;border-radius:5.4px;background:#3b3968;'></div>
<div class='a' style='left:228.91px;top:412.90px;width:10.80px;height:37.80px;border-radius:5.4px;background:#3b3968;'></div>
<div class='a' style='left:318.39px;top:412.90px;width:10.80px;height:31.90px;border-radius:5.4px 5.4px 0 0;background:#3b3968;'></div>
<div class='a' style='left:407.87px;top:407.50px;width:10.80px;height:37.30px;border-radius:5.4px 5.4px 0 0;background:#3b3968;'></div>
<div class='a' style='left:497.35px;top:412.90px;width:10.80px;height:31.90px;border-radius:5.4px 5.4px 0 0;background:#3b3968;'></div>
<div class='a' style='left:586.83px;top:412.90px;width:10.80px;height:37.80px;border-radius:5.4px;background:#3b3968;'></div>
<div class='a' style='left:676.31px;top:412.90px;width:10.80px;height:37.80px;border-radius:5.4px;background:#3b3968;'></div>
<div class='a' style='left:365.78px;top:410.75px;width:5.50px;height:5.50px;border-radius:50%;background:#383663'></div>
<div class='a' style='left:388.15px;top:410.75px;width:5.50px;height:5.50px;border-radius:50%;background:#383663'></div>
<div class='a' style='left:432.89px;top:410.75px;width:5.50px;height:5.50px;border-radius:50%;background:#383663'></div>
<div class='a' style='left:455.26px;top:410.75px;width:5.50px;height:5.50px;border-radius:50%;background:#383663'></div>
<div class='a' style='left:477.63px;top:410.75px;width:5.50px;height:5.50px;border-radius:50%;background:#383663'></div>
<div class='a' style='left:410.77px;top:410.90px;width:5.00px;height:5.00px;border-radius:50%;background:#1f1e3b'></div>
<div class='a' style='left:52.85px;top:442.80px;width:5.00px;height:5.00px;border-radius:50%;background:#1f1e3b'></div>
<div class='a' style='left:74.97px;top:442.65px;width:5.50px;height:5.50px;border-radius:50%;background:#383663'></div>
<div class='a' style='left:97.34px;top:442.65px;width:5.50px;height:5.50px;border-radius:50%;background:#383663'></div>
<div class='a' style='left:119.71px;top:442.65px;width:5.50px;height:5.50px;border-radius:50%;background:#383663'></div>
<div class='a' style='left:142.33px;top:442.80px;width:5.00px;height:5.00px;border-radius:50%;background:#1f1e3b'></div>
<div class='a' style='left:164.45px;top:442.65px;width:5.50px;height:5.50px;border-radius:50%;background:#383663'></div>
<div class='a' style='left:186.82px;top:442.65px;width:5.50px;height:5.50px;border-radius:50%;background:#383663'></div>
<div class='a' style='left:209.19px;top:442.65px;width:5.50px;height:5.50px;border-radius:50%;background:#383663'></div>
<div class='a' style='left:231.81px;top:442.80px;width:5.00px;height:5.00px;border-radius:50%;background:#1f1e3b'></div>
<div class='a' style='left:253.93px;top:442.65px;width:5.50px;height:5.50px;border-radius:50%;background:#383663'></div>
<div class='a' style='left:276.30px;top:442.65px;width:5.50px;height:5.50px;border-radius:50%;background:#383663'></div>
<div class='a' style='left:298.67px;top:442.65px;width:5.50px;height:5.50px;border-radius:50%;background:#383663'></div>
<div class='a' style='left:567.11px;top:442.65px;width:5.50px;height:5.50px;border-radius:50%;background:#383663'></div>
<div class='a' style='left:589.73px;top:442.80px;width:5.00px;height:5.00px;border-radius:50%;background:#1f1e3b'></div>
<div class='a' style='left:611.85px;top:442.65px;width:5.50px;height:5.50px;border-radius:50%;background:#383663'></div>
<div class='a' style='left:634.22px;top:442.65px;width:5.50px;height:5.50px;border-radius:50%;background:#383663'></div>
<div class='a' style='left:656.59px;top:442.65px;width:5.50px;height:5.50px;border-radius:50%;background:#383663'></div>
<div class='a' style='left:679.21px;top:442.80px;width:5.00px;height:5.00px;border-radius:50%;background:#1f1e3b'></div>
<div class='a' style='left:701.33px;top:442.65px;width:5.50px;height:5.50px;border-radius:50%;background:#383663'></div>
<div class='a' style='left:723.70px;top:442.65px;width:5.50px;height:5.50px;border-radius:50%;background:#383663'></div>
<div class='a' style='left:746.07px;top:442.65px;width:5.50px;height:5.50px;border-radius:50%;background:#383663'></div>
<div class='a' style='left:49.95px;top:407.35px;width:77.91px;height:11.10px;border-radius:999px;background:#fa4470;'></div>
<div class='x' style='left:57.20px;top:411.21px;font-size:6.3px;letter-spacing:0.53px;color:#ffd9e1;font-weight:bold;'>Cm11</div>
<div class='a' style='left:139.43px;top:407.35px;width:212.13px;height:11.10px;border-radius:999px;background:#fa4470;'></div>
<div class='x' style='left:146.00px;top:411.21px;font-size:6.3px;letter-spacing:0.70px;color:#ffd9e1;font-weight:bold;'>Fm11</div>
<div class='a' style='left:497.35px;top:407.35px;width:212.13px;height:11.10px;border-radius:999px;background:#fa4470;'></div>
<div class='x' style='left:503.80px;top:411.21px;font-size:6.3px;letter-spacing:0.59px;color:#ffd9e1;font-weight:bold;'>Cm11</div>
<div class='a' style='left:721.05px;top:407.35px;width:33.17px;height:11.10px;border-radius:999px;background:#fa4470;'></div>
<div class='x' style='left:726.80px;top:411.21px;font-size:6.3px;letter-spacing:0.63px;color:#ffd9e1;font-weight:bold;'>Fm11</div>
<div class='a' style='left:318.39px;top:439.25px;width:234.50px;height:11.10px;border-radius:999px;background:#0cf8a2;'></div>
<div class='x' style='left:325.00px;top:443.03px;font-size:6.3px;letter-spacing:0.19px;color:#35c795;font-weight:bold;'>G#</div>
<svg style='left:18px;top:401px' width='21' height='22' viewBox='0 0 21 22'><g fill="#eceaf7"><circle cx="10.5" cy="1.8" r="1.25"/><rect x="10" y="2.2" width="1" height="5"/><rect x="0.9" y="6.9" width="19.2" height="10.3" rx="2.6"/></g><rect x="3.8" y="17.5" width="13.4" height="1.8" rx=".6" fill="#d3d0e4"/><rect x="5.4" y="19.2" width="10.2" height="1.6" rx=".7" fill="#bebbd4"/><circle cx="6.1" cy="10.9" r="1.8" fill="#1f1e3b"/><circle cx="14.8" cy="10.9" r="1.8" fill="#1f1e3b"/></svg>
<svg style='left:18.6px;top:436.3px' width='15.6' height='19' viewBox='0 0 17 19.5'><path d="M9 0.3 C13.4 0.3 16.8 3.6 16.8 7.8 C16.8 10.6 15.6 12.6 14.2 14 L14.6 19.3 L6.4 19.3 L5.8 16.4 L3.6 16.4 C2.6 16.4 2.2 15.8 2.2 15 L2.2 12.4 L0.7 11.9 C0.2 11.7 0.3 11.2 0.6 10.8 L2 8.2 C1.8 3.4 4.6 0.3 9 0.3Z" fill="#eceaf7"/></svg>
<div class='a' style='left:768.00px;top:408.70px;width:2.50px;height:2.50px;border-radius:50%;background:#7d78b4'></div>
<div class='a' style='left:768.00px;top:412.30px;width:2.50px;height:2.50px;border-radius:50%;background:#7d78b4'></div>
<div class='a' style='left:768.00px;top:415.90px;width:2.50px;height:2.50px;border-radius:50%;background:#7d78b4'></div>
<div class='a' style='left:772.50px;top:408.70px;width:2.50px;height:2.50px;border-radius:50%;background:#7d78b4'></div>
<div class='a' style='left:772.50px;top:412.30px;width:2.50px;height:2.50px;border-radius:50%;background:#7d78b4'></div>
<div class='a' style='left:772.50px;top:415.90px;width:2.50px;height:2.50px;border-radius:50%;background:#7d78b4'></div>
<svg style='left:785.6px;top:407.9px' width='9' height='11' viewBox='0 0 9 11'><path d='M0.5 2 H8.5 M3 2 V0.7 H6 V2 M1.3 2 L1.8 10.3 H7.2 L7.7 2 M3.4 4 V8.5 M5.6 4 V8.5' fill='none' stroke='#4a4777' stroke-width='.9' stroke-linejoin='round'/></svg>
<div class='a' style='left:768.00px;top:440.60px;width:2.50px;height:2.50px;border-radius:50%;background:#7d78b4'></div>
<div class='a' style='left:768.00px;top:444.20px;width:2.50px;height:2.50px;border-radius:50%;background:#7d78b4'></div>
<div class='a' style='left:768.00px;top:447.80px;width:2.50px;height:2.50px;border-radius:50%;background:#7d78b4'></div>
<div class='a' style='left:772.50px;top:440.60px;width:2.50px;height:2.50px;border-radius:50%;background:#7d78b4'></div>
<div class='a' style='left:772.50px;top:444.20px;width:2.50px;height:2.50px;border-radius:50%;background:#7d78b4'></div>
<div class='a' style='left:772.50px;top:447.80px;width:2.50px;height:2.50px;border-radius:50%;background:#7d78b4'></div>
<svg style='left:785.6px;top:439.8px' width='9' height='11' viewBox='0 0 9 11'><path d='M0.5 2 H8.5 M3 2 V0.7 H6 V2 M1.3 2 L1.8 10.3 H7.2 L7.7 2 M3.4 4 V8.5 M5.6 4 V8.5' fill='none' stroke='#4a4777' stroke-width='.9' stroke-linejoin='round'/></svg>
<div class='a' style='left:454.80px;top:462.80px;width:5.00px;height:5.00px;border-radius:50%;background:#fff'></div>
<svg style='left:96px;top:489px' width='13' height='17' viewBox='0 0 13 17'><path d='M11.6 1 L1 8.3 L11.6 15.6Z' fill='#4a4388' stroke='#4a4388' stroke-width='1.2' stroke-linejoin='round'/></svg>
<svg style='left:693.3px;top:489px' width='13' height='17' viewBox='0 0 13 17'><path d='M1.4 1 L12 8.3 L1.4 15.6Z' fill='#4a4388' stroke='#4a4388' stroke-width='1.2' stroke-linejoin='round'/></svg>
<div class='a' style='left:120.00px;top:516.00px;width:33.00px;height:66.60px;border-radius:16.5px;background:#3b3967;box-shadow:0 3px 4px rgba(10,9,30,.5)'></div>
<div class='x' style='left:132.05px;top:569.31px;font-size:6.4px;letter-spacing:0.90px;color:#8582b0;font-weight:bold;'>C4</div>
<div class='a' style='left:155.63px;top:516.00px;width:33.00px;height:66.60px;border-radius:16.5px;background:#3b3967;box-shadow:0 3px 4px rgba(10,9,30,.5)'></div>
<div class='x' style='left:167.68px;top:569.31px;font-size:6.4px;letter-spacing:0.90px;color:#8582b0;font-weight:bold;'>D4</div>
<div class='a' style='left:191.26px;top:516.00px;width:33.00px;height:66.60px;border-radius:16.5px;background:#3b3967;box-shadow:0 3px 4px rgba(10,9,30,.5)'></div>
<div class='x' style='left:203.49px;top:569.31px;font-size:6.4px;letter-spacing:0.90px;color:#8582b0;font-weight:bold;'>E4</div>
<div class='a' style='left:226.89px;top:516.00px;width:33.00px;height:66.60px;border-radius:16.5px;background:#3b3967;box-shadow:0 3px 4px rgba(10,9,30,.5)'></div>
<div class='x' style='left:239.31px;top:569.31px;font-size:6.4px;letter-spacing:0.90px;color:#8582b0;font-weight:bold;'>F4</div>
<div class='a' style='left:262.52px;top:516.00px;width:33.00px;height:66.60px;border-radius:16.5px;background:#3b3967;box-shadow:0 3px 4px rgba(10,9,30,.5)'></div>
<div class='x' style='left:274.40px;top:569.31px;font-size:6.4px;letter-spacing:0.90px;color:#8582b0;font-weight:bold;'>G4</div>
<div class='a' style='left:298.15px;top:516.00px;width:33.00px;height:66.60px;border-radius:16.5px;background:radial-gradient(ellipse 85% 52% at 50% 54%,#966afc 0%,#825cec 35%,#6c4ed0 70%,#5a44b0 100%);box-shadow:0 3px 4px rgba(10,9,30,.5)'></div>
<div class='x' style='left:310.20px;top:569.31px;font-size:6.4px;letter-spacing:0.90px;color:#fff;font-weight:bold;'>A4</div>
<div class='a' style='left:333.78px;top:516.00px;width:33.00px;height:66.60px;border-radius:16.5px;background:#3b3967;box-shadow:0 3px 4px rgba(10,9,30,.5)'></div>
<div class='x' style='left:345.83px;top:569.31px;font-size:6.4px;letter-spacing:0.90px;color:#8582b0;font-weight:bold;'>B4</div>
<div class='a' style='left:369.41px;top:516.00px;width:33.00px;height:66.60px;border-radius:16.5px;background:radial-gradient(ellipse 85% 52% at 50% 54%,#966afc 0%,#825cec 35%,#6c4ed0 70%,#5a44b0 100%);box-shadow:0 3px 4px rgba(10,9,30,.5)'></div>
<div class='x' style='left:381.46px;top:569.31px;font-size:6.4px;letter-spacing:0.90px;color:#fff;font-weight:bold;'>C5</div>
<div class='a' style='left:405.04px;top:516.00px;width:33.00px;height:66.60px;border-radius:16.5px;background:#3b3967;box-shadow:0 3px 4px rgba(10,9,30,.5)'></div>
<div class='x' style='left:417.09px;top:569.31px;font-size:6.4px;letter-spacing:0.90px;color:#8582b0;font-weight:bold;'>D5</div>
<div class='a' style='left:440.67px;top:516.00px;width:33.00px;height:66.60px;border-radius:16.5px;background:#3b3967;box-shadow:0 3px 4px rgba(10,9,30,.5)'></div>
<div class='x' style='left:452.90px;top:569.31px;font-size:6.4px;letter-spacing:0.90px;color:#8582b0;font-weight:bold;'>E5</div>
<div class='a' style='left:476.30px;top:516.00px;width:33.00px;height:66.60px;border-radius:16.5px;background:#3b3967;box-shadow:0 3px 4px rgba(10,9,30,.5)'></div>
<div class='x' style='left:488.72px;top:569.31px;font-size:6.4px;letter-spacing:0.90px;color:#8582b0;font-weight:bold;'>F5</div>
<div class='a' style='left:511.93px;top:516.00px;width:33.00px;height:66.60px;border-radius:16.5px;background:radial-gradient(ellipse 85% 52% at 50% 54%,#966afc 0%,#825cec 35%,#6c4ed0 70%,#5a44b0 100%);box-shadow:0 3px 4px rgba(10,9,30,.5)'></div>
<div class='x' style='left:523.81px;top:569.31px;font-size:6.4px;letter-spacing:0.90px;color:#fff;font-weight:bold;'>G5</div>
<div class='a' style='left:547.56px;top:516.00px;width:33.00px;height:66.60px;border-radius:16.5px;background:#3b3967;box-shadow:0 3px 4px rgba(10,9,30,.5)'></div>
<div class='x' style='left:559.61px;top:569.31px;font-size:6.4px;letter-spacing:0.90px;color:#8582b0;font-weight:bold;'>A5</div>
<div class='a' style='left:583.19px;top:516.00px;width:33.00px;height:66.60px;border-radius:16.5px;background:#3b3967;box-shadow:0 3px 4px rgba(10,9,30,.5)'></div>
<div class='x' style='left:595.24px;top:569.31px;font-size:6.4px;letter-spacing:0.90px;color:#8582b0;font-weight:bold;'>B5</div>
<div class='a' style='left:618.82px;top:516.00px;width:33.00px;height:66.60px;border-radius:16.5px;background:#3b3967;box-shadow:0 3px 4px rgba(10,9,30,.5)'></div>
<div class='x' style='left:630.87px;top:569.31px;font-size:6.4px;letter-spacing:0.90px;color:#8582b0;font-weight:bold;'>C6</div>
<div class='a' style='left:654.45px;top:516.00px;width:33.00px;height:66.60px;border-radius:16.5px;background:radial-gradient(ellipse 85% 52% at 50% 54%,#966afc 0%,#825cec 35%,#6c4ed0 70%,#5a44b0 100%);box-shadow:0 3px 4px rgba(10,9,30,.5)'></div>
<div class='x' style='left:666.50px;top:569.31px;font-size:6.4px;letter-spacing:0.90px;color:#fff;font-weight:bold;'>D6</div>
<div class='a' style='left:138.90px;top:481.30px;width:31.20px;height:31.20px;border-radius:50%;background:#2e2b53;box-shadow:0 2px 3px rgba(10,9,30,.35)'></div>
<div class='a' style='left:175.90px;top:481.30px;width:31.20px;height:31.20px;border-radius:50%;background:#2e2b53;box-shadow:0 2px 3px rgba(10,9,30,.35)'></div>
<div class='a' style='left:245.70px;top:481.30px;width:31.20px;height:31.20px;border-radius:50%;background:#2e2b53;box-shadow:0 2px 3px rgba(10,9,30,.35)'></div>
<div class='a' style='left:282.40px;top:481.30px;width:31.20px;height:31.20px;border-radius:50%;background:radial-gradient(circle at 50% 52%,#9169f6 0%,#7d58e6 50%,#6649c2 100%);box-shadow:0 2px 3px rgba(10,9,30,.35)'></div>
<div class='a' style='left:318.60px;top:481.30px;width:31.20px;height:31.20px;border-radius:50%;background:#2e2b53;box-shadow:0 2px 3px rgba(10,9,30,.35)'></div>
<div class='a' style='left:388.40px;top:481.30px;width:31.20px;height:31.20px;border-radius:50%;background:#2e2b53;box-shadow:0 2px 3px rgba(10,9,30,.35)'></div>
<div class='a' style='left:425.40px;top:481.30px;width:31.20px;height:31.20px;border-radius:50%;background:radial-gradient(circle at 50% 52%,#9169f6 0%,#7d58e6 50%,#6649c2 100%);box-shadow:0 2px 3px rgba(10,9,30,.35)'></div>
<div class='a' style='left:494.70px;top:481.30px;width:31.20px;height:31.20px;border-radius:50%;background:#2e2b53;box-shadow:0 2px 3px rgba(10,9,30,.35)'></div>
<div class='a' style='left:531.60px;top:481.30px;width:31.20px;height:31.20px;border-radius:50%;background:#2e2b53;box-shadow:0 2px 3px rgba(10,9,30,.35)'></div>
<div class='a' style='left:567.60px;top:481.30px;width:31.20px;height:31.20px;border-radius:50%;background:#2e2b53;box-shadow:0 2px 3px rgba(10,9,30,.35)'></div>
<div class='a' style='left:637.60px;top:481.30px;width:31.20px;height:31.20px;border-radius:50%;background:#2e2b53;box-shadow:0 2px 3px rgba(10,9,30,.35)'></div>
<div class='a' style='left:20.00px;top:528.00px;width:74.30px;height:23.40px;border-radius:999px;border:1px solid #6645c6;'></div>
<div class='x' style='left:49.20px;top:534.50px;font-size:9.8px;letter-spacing:0.32px;color:#fff;font-weight:bold;'>G#</div>
<div class='x' style='left:38.20px;top:569.87px;font-size:7px;letter-spacing:0.75px;color:#827db4;font-weight:bold;'>PRESETS</div>
<div class='a' style='left:706.20px;top:523.80px;width:74.30px;height:23.60px;border-radius:999px;border:1px solid #6645c6;'></div>
<svg style='left:709.9px;top:527.6px' width='16' height='16' viewBox='0 0 16 16'><circle cx='8' cy='8' r='8' fill='#f4f2fb'/><circle cx='3.10' cy='8.20' r='1.05' fill='#1f1e3b'/><circle cx='4.54' cy='4.74' r='1.05' fill='#1f1e3b'/><circle cx='8.00' cy='3.30' r='1.05' fill='#1f1e3b'/><circle cx='11.46' cy='4.74' r='1.05' fill='#1f1e3b'/><circle cx='12.90' cy='8.20' r='1.05' fill='#1f1e3b'/><rect x='6.7' y='12.6' width='2.6' height='3.6' fill='#1f1e3b'/></svg>
<div class='x' style='left:732.20px;top:534.57px;font-size:4.8px;letter-spacing:-0.01px;color:#efedf8;font-weight:bold;'>DRAG CHORD</div>
<div class='a' style='left:706.20px;top:561.00px;width:74.30px;height:23.60px;border-radius:999px;border:1px solid #6645c6;'></div>
<svg style='left:709.9px;top:564.8px' width='16' height='16' viewBox='0 0 16 16'><circle cx='8' cy='8' r='8' fill='#f4f2fb'/><circle cx='3.10' cy='8.20' r='1.05' fill='#1f1e3b'/><circle cx='4.54' cy='4.74' r='1.05' fill='#1f1e3b'/><circle cx='8.00' cy='3.30' r='1.05' fill='#1f1e3b'/><circle cx='11.46' cy='4.74' r='1.05' fill='#1f1e3b'/><circle cx='12.90' cy='8.20' r='1.05' fill='#1f1e3b'/><rect x='6.7' y='12.6' width='2.6' height='3.6' fill='#1f1e3b'/></svg>
<div class='x' style='left:732.20px;top:572.00px;font-size:4.7px;letter-spacing:0.02px;color:#efedf8;font-weight:bold;'>DRAG SEQ</div>
</body></html>
